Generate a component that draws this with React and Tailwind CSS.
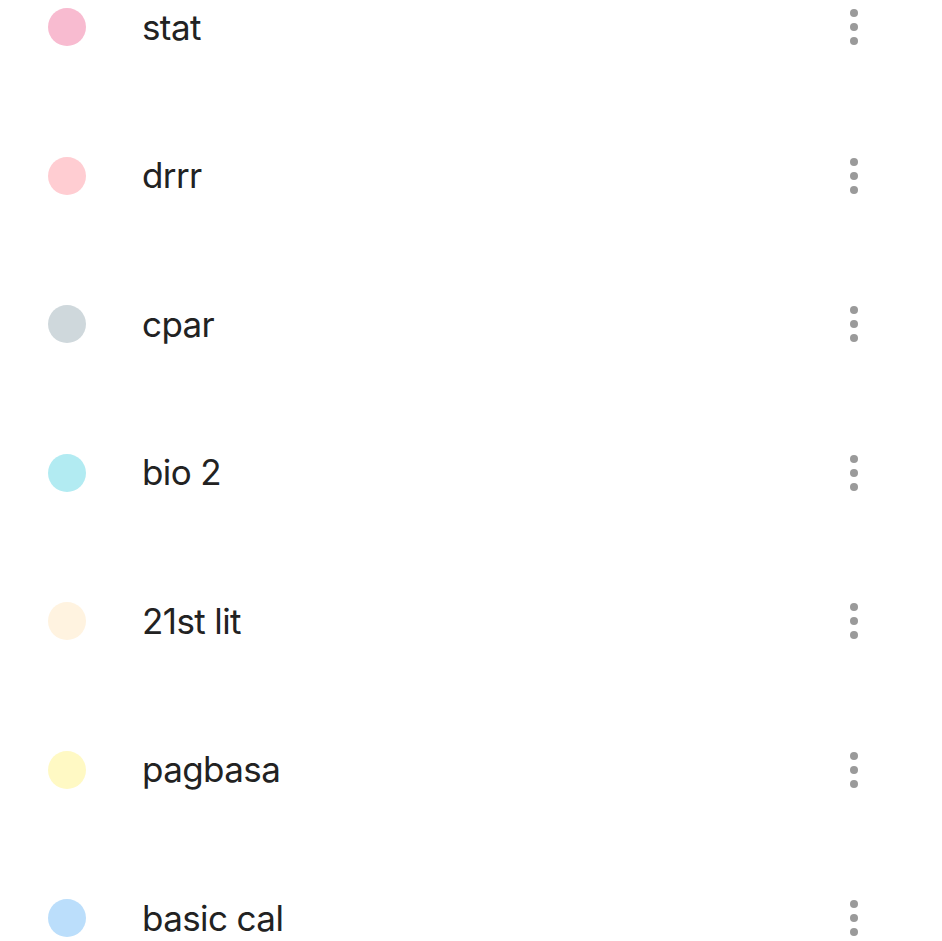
import React from 'react';

const subjects = [
    { name: 'stat', color: 'bg-[#f8bbd0]' },
    { name: 'drrr', color: 'bg-[#ffcdd2]' },
    { name: 'cpar', color: 'bg-[#cfd8dc]' },
    { name: 'bio 2', color: 'bg-[#b2ebf2]' },
    { name: '21st lit', color: 'bg-[#fff3e0]' },
    { name: 'pagbasa', color: 'bg-[#fff9c4]' },
    { name: 'basic cal', color: 'bg-[#bbdefb]' },
];

function MoreIcon() {
    return (
        <div className="flex flex-col items-center gap-[6px]">
            <span className="w-2 h-2 rounded-full bg-[#9a9a9a]"></span>
            <span className="w-2 h-2 rounded-full bg-[#9a9a9a]"></span>
            <span className="w-2 h-2 rounded-full bg-[#9a9a9a]"></span>
        </div>
    );
}

export default function App() {
    return (
        <div className="w-[942px] h-[941px] overflow-hidden bg-white font-['Inter',sans-serif]">
            <div className="-mt-[47px]">
                {subjects.map((s) => (
                    <div key={s.name} className="h-[148.5px] flex items-center pl-[48px] pr-[84px]">
                        <span className={`w-[38px] h-[38px] rounded-full shrink-0 ${s.color}`}></span>
                        <span className="ml-[56px] flex-1 text-[35px] leading-none tracking-[-0.6px] text-[#222222]">{s.name}</span>
                        <MoreIcon />
                    </div>
                ))}
            </div>
        </div>
    );
}
